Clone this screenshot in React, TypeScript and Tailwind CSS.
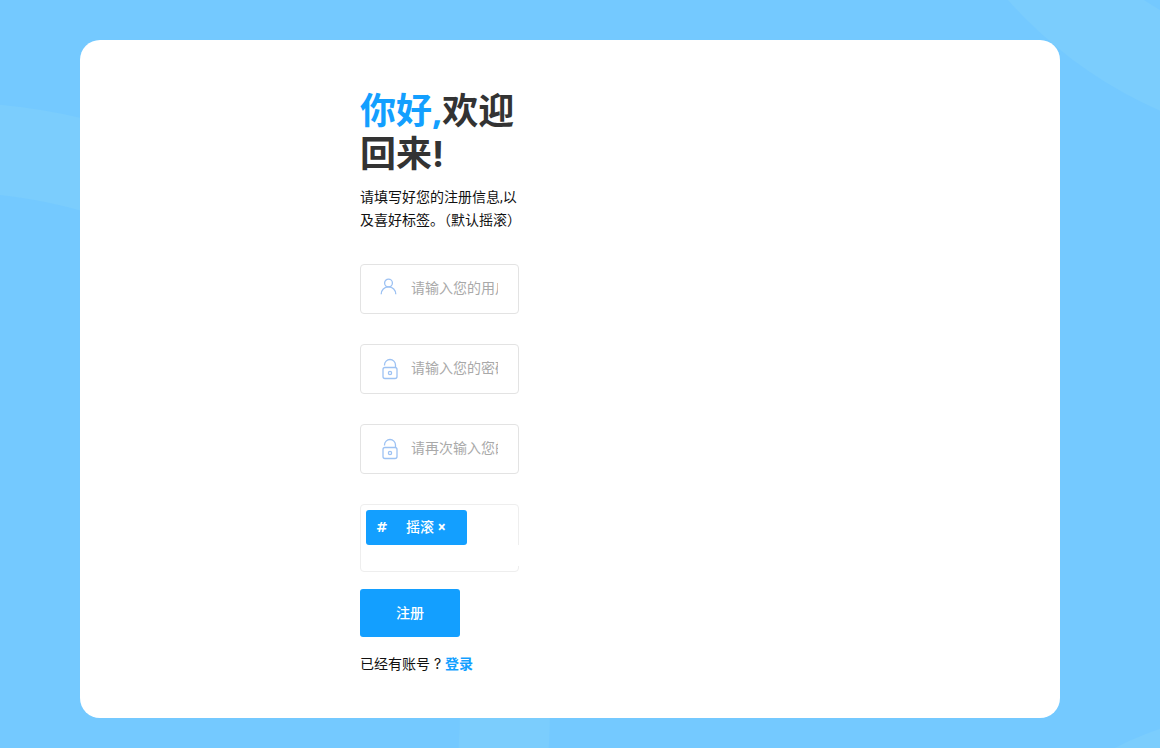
import { useState } from "react"
import type { ReactNode } from "react"

interface FieldProps {
  id: string
  label: string
  type: string
  placeholder: string
  icon: ReactNode
}

function UserIcon() {
  return (
    <svg className="h-5 w-5" viewBox="0 0 20 20" fill="none" stroke="#9dc2f3" strokeWidth="1.3">
      <circle cx="10.500" cy="6" r="3.900" />
      <path d="M3.200 17.200c0-4.200 3.100-7.300 7.300-7.300s7.300 3.100 7.300 7.300" />
    </svg>
  )
}

function LockIcon() {
  return (
    <svg className="h-6 w-5" viewBox="0 0 20 24" fill="none" stroke="#9dc2f3" strokeWidth="1.3">
      <path d="M6.500 8.500V8a5.500 5.500 0 0 1 11 0V10.500" />
      <rect x="5" y="10.500" width="14" height="11" rx="2" />
      <circle cx="12" cy="16" r="1.600" />
    </svg>
  )
}

function Field({ id, label, type, placeholder, icon }: FieldProps) {
  return (
    <div className="flex h-[50px] items-center rounded border border-[#e3e3e3] pr-5">
      <label htmlFor={id} aria-label={label} className="flex h-full w-[50px] shrink-0 pt-3 pl-[17px]">
        {icon}
      </label>
      <input
        id={id}
        type={type}
        placeholder={placeholder}
        className="w-full min-w-0 pb-[2px] text-sm outline-none placeholder:text-[#a9a9a9]"
      />
    </div>
  )
}

function Background() {
  return (
    <div className="absolute inset-0 overflow-hidden">
      <svg width="1920" height="1080" fill="none" stroke="#7bcdfd" strokeWidth="90">
        <circle cx="-57" cy="709" r="562" />
        <circle cx="1334" cy="-288" r="390" />
        <circle cx="1293" cy="1106" r="355" />
      </svg>
    </div>
  )
}

export default function App() {
  const [tags, setTags] = useState(["摇滚"])

  return (
    <div className="relative min-h-screen bg-[#74c9ff] pt-10 pr-[100px] pb-[30px] pl-20 font-['Roboto','Noto_Sans_CJK_SC',sans-serif] text-sm text-[#111]">
      <Background />
      <main className="relative rounded-[20px] bg-white px-[280px] pt-[49px] pb-[43px]">
        <form className="w-[159px]" onSubmit={(e) => e.preventDefault()}>
          <h1 className="font-['Open_Sans','Noto_Sans_CJK_SC',sans-serif] text-4xl leading-[43px] font-bold text-[#333]">
            <span className="text-[#139fff]">你好,</span>欢迎回来<span className="font-['Inter']">!</span>
          </h1>
          <p className="mt-[10px] leading-[23px]">请填写好您的注册信息,以及喜好标签。（默认摇滚）</p>

          <div className="mt-8 space-y-[30px]">
            <Field id="username" label="用户名" type="text" placeholder="请输入您的用户名" icon={<UserIcon />} />
            <Field id="password" label="密码" type="password" placeholder="请输入您的密码" icon={<LockIcon />} />
            <Field id="confirm" label="确认密码" type="password" placeholder="请再次输入您的密码" icon={<LockIcon />} />

            {/* Tags */}
            <div className="relative h-[68px] rounded border border-[#eee] p-[5px]">
              {tags.map((tag) => (
                <span key={tag} className="flex h-[35px] w-[101px] items-center rounded-[3px] bg-[#139fff] pb-[2px] pl-[10px] font-medium text-white">
                  <span className="w-[30px] font-['DejaVu_Sans'] font-bold">#</span>
                  <span>{tag}</span>
                  <button
                    type="button"
                    className="ml-1 cursor-pointer font-bold"
                    onClick={() => setTags(tags.filter((t) => t !== tag))}
                  >
                    ×
                  </button>
                </span>
              ))}
              <input aria-label="标签" className="absolute top-10 -right-px h-[21px] w-[140px] bg-white outline-none" />
            </div>
          </div>

          <button type="submit" className="mt-[17px] h-12 w-[100px] cursor-pointer rounded-[3px] bg-[#139fff] font-medium text-white">
            注册
          </button>
          <p className="mt-[15px] font-['Inter','Noto_Sans_CJK_SC',sans-serif] leading-[23px]">
            已经有账号 ?{" "}
            <a href="#login" className="font-bold text-[#139fff]">登录</a>
          </p>
        </form>
      </main>
    </div>
  )
}
